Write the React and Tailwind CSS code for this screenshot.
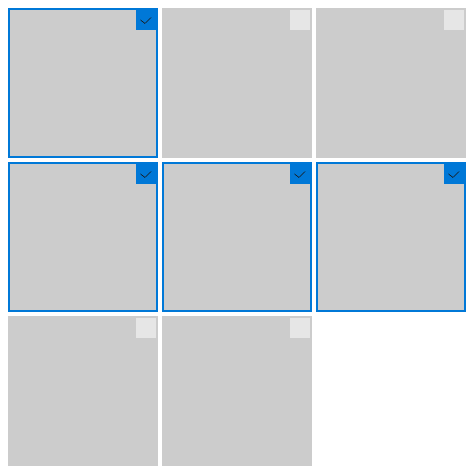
const items = [true, false, false, true, true, true, false, false];

const Tile = ({ selected }) => (
  <div
    className={
      "relative w-[150px] h-[150px] bg-[#cccccc] " +
      (selected ? "border-2 border-[#0078d7]" : "")
    }
  >
    {selected ? (
      <div className="absolute top-0 right-0 w-5 h-5 bg-[#0078d7] flex items-center justify-center">
        <svg width="20" height="20" viewBox="0 0 20 20">
          <polyline
            points="4.5,10 9,13.5 15,7.5"
            fill="none"
            stroke="#1a1a1a"
            strokeWidth="1"
          />
        </svg>
      </div>
    ) : (
      <div className="absolute top-[2px] right-[2px] w-5 h-5 bg-[#e6e6e6]" />
    )}
  </div>
);

export default function App() {
  return (
    <div className="bg-white w-[474px] h-[476px] p-2">
      <div className="grid grid-cols-[150px_150px_150px] gap-1">
        {items.map((s, i) => (
          <Tile key={i} selected={s} />
        ))}
      </div>
    </div>
  );
}
